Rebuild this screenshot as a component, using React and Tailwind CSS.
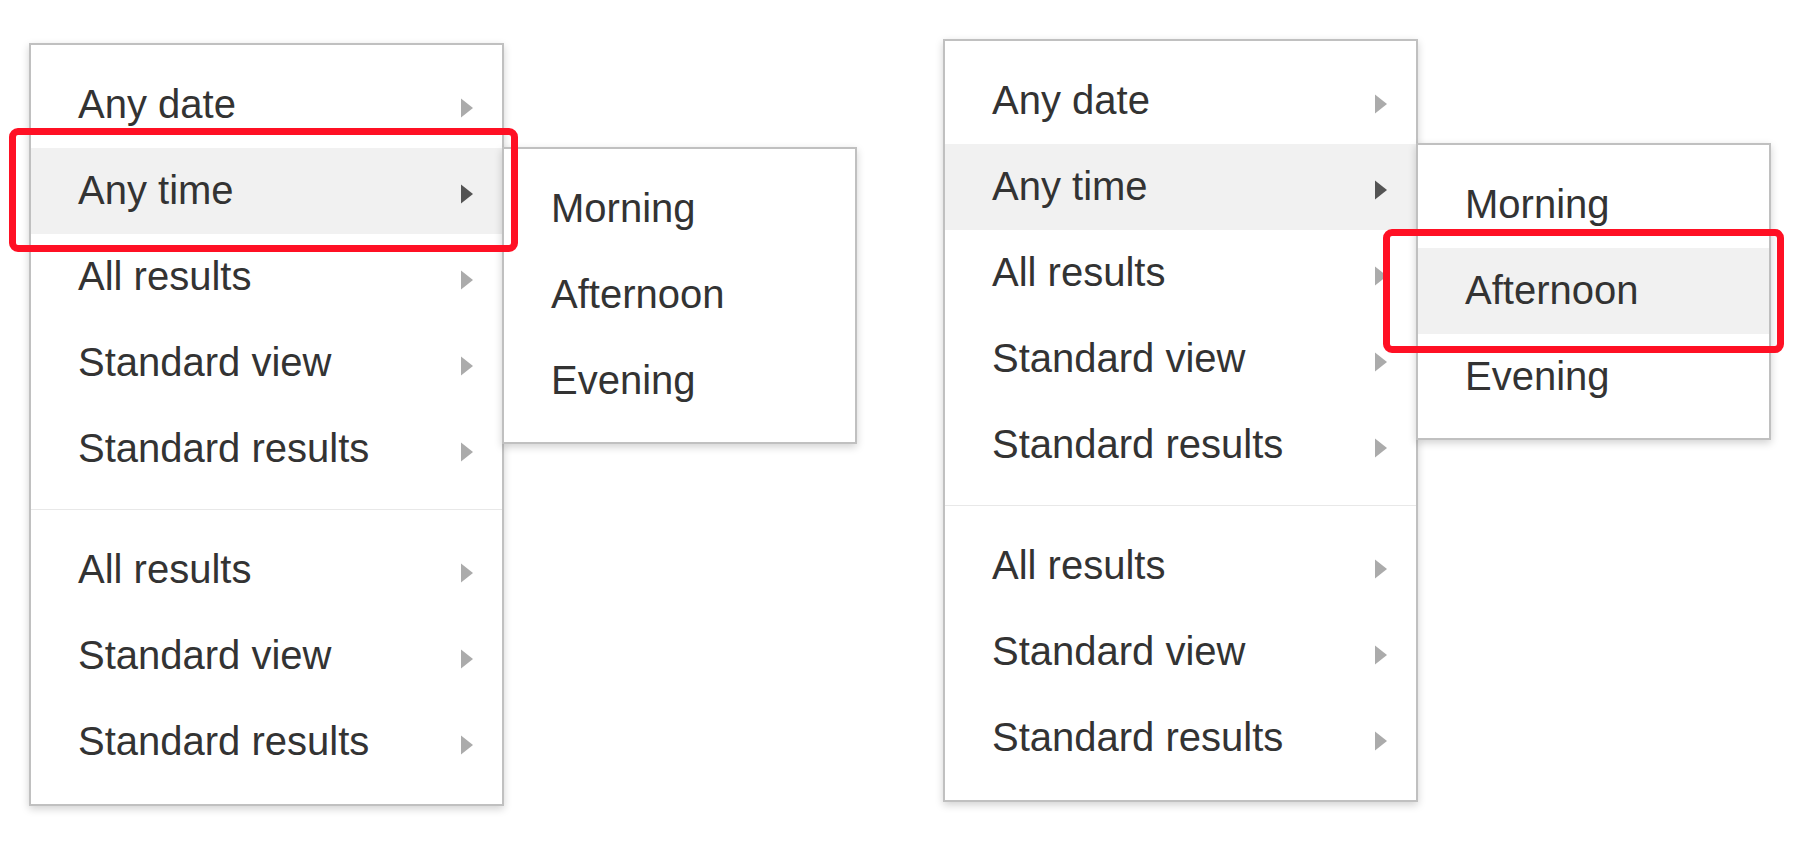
import React from "react";

function Arrow({ dark }) {
  return (
    <svg width="12" height="20" viewBox="0 0 12 20" className="shrink-0">
      <path d="M0 0.5 L12 10 L0 19.5 Z" fill={dark ? "#545454" : "#ababab"} />
    </svg>
  );
}

function Row({ label, active, arrow = true }) {
  return (
    <div
      className={
        active
          ? "flex h-[86px] justify-between bg-[#f1f1f1] pl-[47px] pr-[29px]"
          : "flex h-[86px] justify-between pl-[47px] pr-[29px]"
      }
    >
      <span className="self-start leading-[84px]">{label}</span>
      {arrow && (
        <div className="mt-[5px] self-center">
          <Arrow dark={active} />
        </div>
      )}
    </div>
  );
}

function Figure({ subActive, redBox }) {
  return (
    <div className="relative w-[475px]">
      <div className="border-2 border-[#c0c0c0] bg-white shadow-[0_3px_8px_rgba(0,0,0,0.18)]">
        <div className="py-[17px]">
          <Row label="Any date" />
          <Row label="Any time" active />
          <Row label="All results" />
          <Row label="Standard view" />
          <Row label="Standard results" />
        </div>
        <div className="h-px bg-[#e8e8e8]" />
        <div className="pb-[19px] pt-[17px]">
          <Row label="All results" />
          <Row label="Standard view" />
          <Row label="Standard results" />
        </div>
      </div>
      <div className="absolute left-[473px] top-[104px] w-[355px] border-2 border-[#c0c0c0] bg-white pb-[18px] pt-[17px] shadow-[0_3px_8px_rgba(0,0,0,0.18)]">
        <Row label="Morning" arrow={false} />
        <Row label="Afternoon" arrow={false} active={subActive} />
        <Row label="Evening" arrow={false} />
      </div>
      {redBox === "left" && (
        <div className="pointer-events-none absolute left-[-20px] top-[85px] h-[124px] w-[509px] rounded-[9px] border-[7px] border-[#ff1024]" />
      )}
      {redBox === "right" && (
        <div className="pointer-events-none absolute left-[440px] top-[190px] h-[124px] w-[401px] rounded-[9px] border-[7px] border-[#ff1024]" />
      )}
    </div>
  );
}

export default function App() {
  return (
    <div
      className="h-[848px] w-[1800px] overflow-hidden bg-white text-[40px] text-[#333333]"
      style={{ fontFamily: '"Liberation Sans", Arial, sans-serif' }}
    >
      <div className="flex items-start pl-[29px]">
        <div className="mt-[43px]">
          <Figure subActive={false} redBox="left" />
        </div>
        <div className="ml-[439px] mt-[39px]">
          <Figure subActive redBox="right" />
        </div>
      </div>
    </div>
  );
}
